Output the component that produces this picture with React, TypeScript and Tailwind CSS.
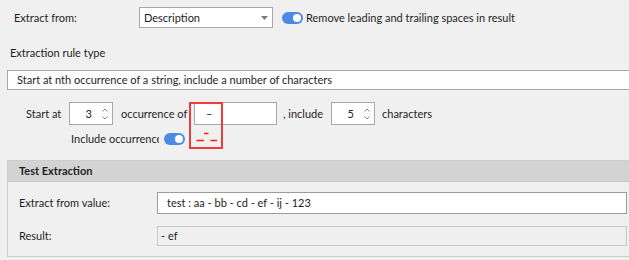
import React from "react";

function Toggle() {
    return (
        <div className="w-[21px] h-[12px] rounded-full bg-[#4d8ae8] flex items-center justify-end pr-[2px] shrink-0">
            <div className="w-[8px] h-[8px] rounded-full bg-white" />
        </div>
    );
}

function Spin({ value }: { value: string }) {
    return (
        <div className="w-[44px] h-[23px] border border-[#a8a8a8] bg-white flex items-center justify-end shrink-0">
            <span className="mr-[9px]">{value}</span>
            <svg width="8" height="16" viewBox="0 0 8 16" className="mr-[3px]">
                <path d="M1.5 5.5 L4 3 L6.5 5.5" fill="none" stroke="#8a8a8a" strokeWidth="1" />
                <path d="M1.5 10.5 L4 13 L6.5 10.5" fill="none" stroke="#8a8a8a" strokeWidth="1" />
            </svg>
        </div>
    );
}

export default function App() {
    return (
        <div
            className="relative w-[629px] h-[260px] overflow-hidden bg-[#f0f0f0] text-[11px] leading-[16px] text-[#1e1e1e]"
            style={{ fontFamily: 'Lato, "Noto Sans", sans-serif' }}
        >
            <div className="flex items-center mt-[7px] pl-[14px]">
                <span className="w-[125px] shrink-0">Extract from:</span>
                <div className="w-[134px] h-[21px] border border-[#a8a8a8] bg-white flex items-center justify-between pl-[4px] pr-[4px] shrink-0">
                    <span>Description</span>
                    <svg width="7" height="4" viewBox="0 0 7 4">
                        <path d="M0 0 H7 L3.5 4 Z" fill="#7a7a7a" />
                    </svg>
                </div>
                <div className="ml-[9px]">
                    <Toggle />
                </div>
                <span className="ml-[3px] whitespace-nowrap">Remove leading and trailing spaces in result</span>
            </div>

            <div className="mt-[17px] pl-[10px]">Extraction rule type</div>

            <div className="mt-[9px] ml-[7px] w-[630px] h-[20px] border border-[#a8a8a8] bg-white flex items-center pl-[9px] whitespace-nowrap">
                Start at nth occurrence of a string, include a number of characters
            </div>

            <div className="flex items-center mt-[12px] pl-[26px] whitespace-nowrap">
                <span className="w-[43px] shrink-0">Start at</span>
                <Spin value="3" />
                <span className="ml-[8px] w-[73px] shrink-0">occurrence of</span>
                <div className="w-[83px] h-[23px] border border-[#a8a8a8] bg-white flex items-center pl-[11px] shrink-0">
                    –
                </div>
                <span className="ml-[6px] w-[48px] shrink-0">, include</span>
                <Spin value="5" />
                <span className="ml-[7px]">characters</span>
            </div>

            <div className="flex items-center mt-[6px] pl-[71px] whitespace-nowrap">
                <span className="w-[88px] overflow-hidden shrink-0">Include occurrence</span>
                <div className="ml-[5px]">
                    <Toggle />
                </div>
            </div>

            {/* red highlight around the separator */}
            <div className="absolute left-[189px] top-[102px] w-[34px] h-[47px] border-2 border-[#ee3b3b]">
                <svg width="30" height="43" viewBox="0 0 30 43" className="block">
                    <path d="M5.5 36.5 H13 M13 29.5 H17.5 M19.5 36.5 H26" stroke="#ff1a1a" strokeWidth="1.5" />
                </svg>
            </div>

            <div className="mt-[13px] ml-[7px] w-[630px] border border-[#cdcdcd]">
                <div className="h-[21px] bg-[#d3d3d3] border-b border-[#c4c4c4] flex items-center pl-[11px] font-bold">
                    Test Extraction
                </div>
                <div className="pl-[11px] pt-[10px] pb-[10px] flex flex-col gap-[12px]">
                    <div className="flex items-center">
                        <span className="w-[138px] shrink-0">Extract from value:</span>
                        <div className="w-[470px] h-[22px] border border-[#9c9c9c] bg-white flex items-center pl-[9px] whitespace-nowrap">
                            test : aa - bb - cd - ef - ij - 123
                        </div>
                    </div>
                    <div className="flex items-center">
                        <span className="w-[138px] shrink-0">Result:</span>
                        <div className="w-[470px] h-[20px] border border-[#c8c8c8] bg-[#efefef] flex items-center pl-[3px] whitespace-nowrap">
                            - ef
                        </div>
                    </div>
                </div>
            </div>
        </div>
    );
}
